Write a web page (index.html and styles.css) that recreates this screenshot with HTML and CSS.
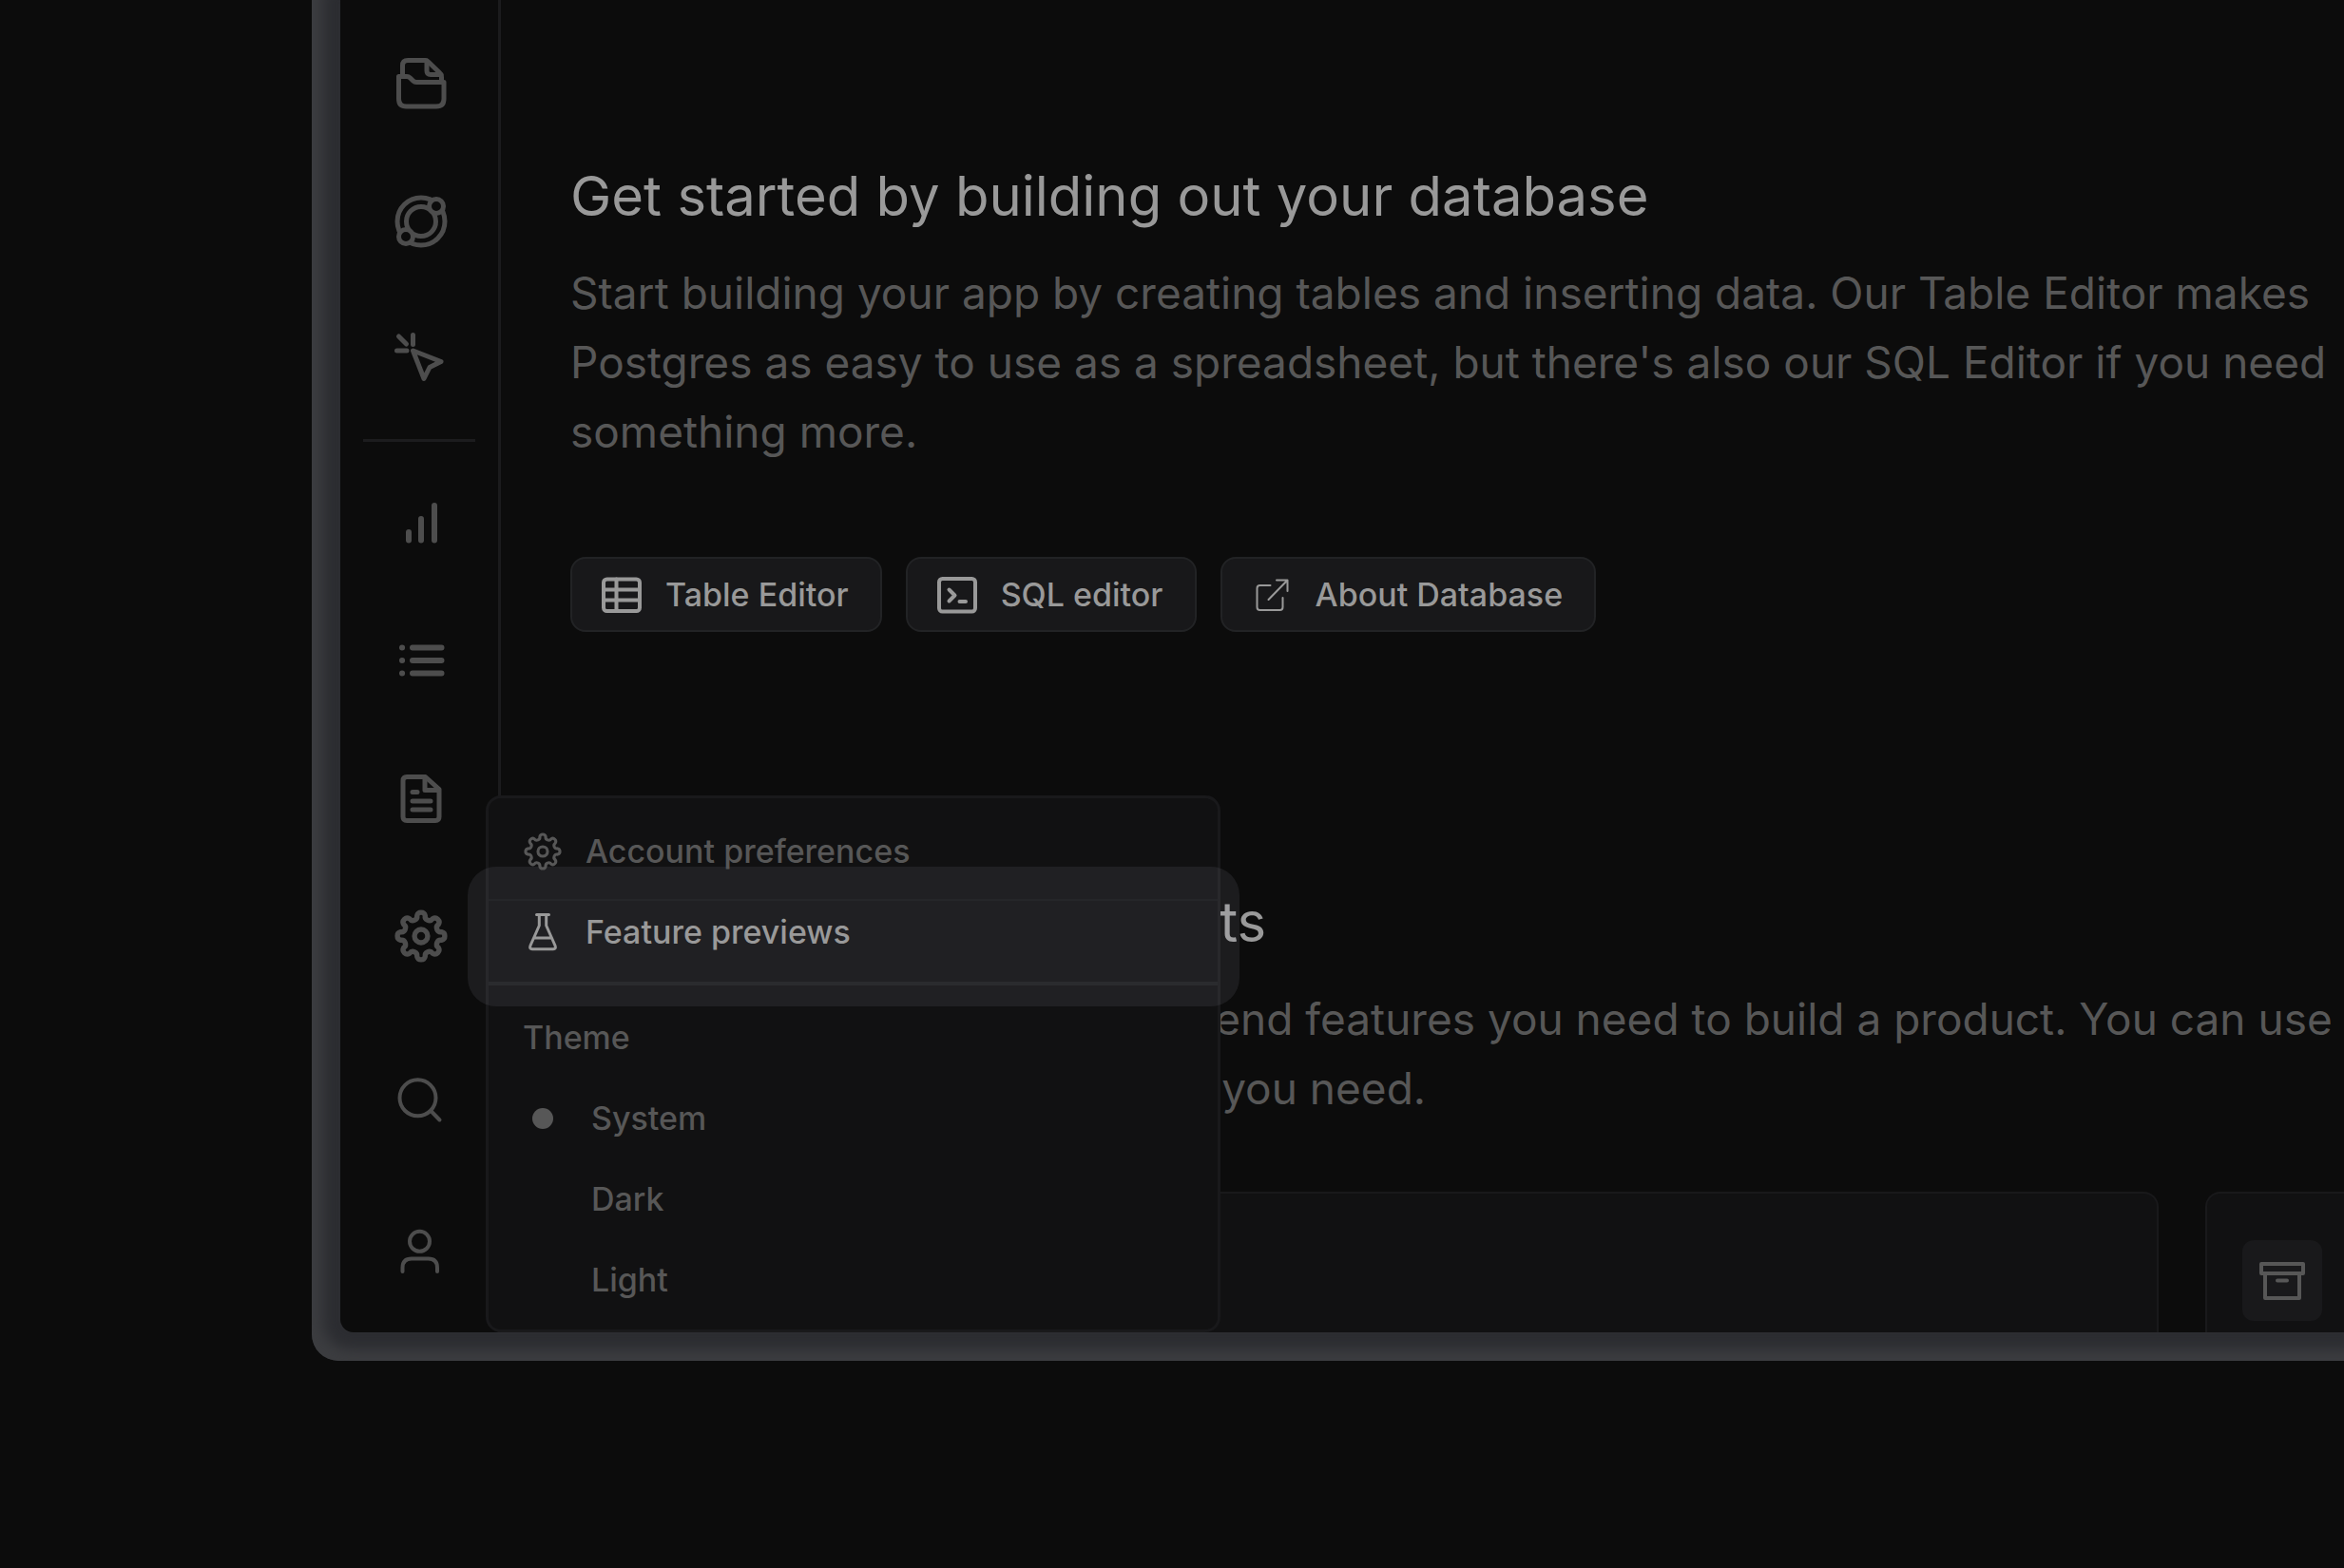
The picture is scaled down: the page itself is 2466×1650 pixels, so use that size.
FILE: index.html
```html
<!DOCTYPE html>
<html lang="en">
<head>
<meta charset="utf-8">
<meta name="viewport" content="width=device-width, initial-scale=1">
<title>Feature previews</title>
<link rel="stylesheet" href="styles.css">
</head>
<body>
<svg class="sprite" aria-hidden="true">
  <symbol id="gear" viewBox="0 0 60 60">
    <g transform="translate(30 30) scale(1.07)">
      <path d="M20.1-4A4.1 4.1 0 0 1 20.1 4A4.1 4.1 0 0 0 17.05 11.4A4.1 4.1 0 0 1 11.4 17.05A4.1 4.1 0 0 0 4 20.1A4.1 4.1 0 0 1-4 20.1A4.1 4.1 0 0 0-11.4 17.05A4.1 4.1 0 0 1-17.05 11.4A4.1 4.1 0 0 0-20.1 4A4.1 4.1 0 0 1-20.1-4A4.1 4.1 0 0 0-17.05-11.4A4.1 4.1 0 0 1-11.4-17.05A4.1 4.1 0 0 0-4-20.1A4.1 4.1 0 0 1 4-20.1A4.1 4.1 0 0 0 11.4-17.05A4.1 4.1 0 0 1 17.05-11.4A4.1 4.1 0 0 0 20.1-4Z"/>
      <circle r="6.500"/>
    </g>
  </symbol>
</svg>

<div class="frame">
  <div class="window">
    <nav class="sidebar" aria-label="Project">
      <a href="#storage" aria-label="Storage"><svg viewBox="0 0 60 60"><path d="M10.5 22V11Q10.5 5.500 16 5.500H34.500Q36 5.500 37.500 7L49.500 18.500Q51.500 20.500 51.500 23V28"/><path d="M36 6V16.500Q36 20.500 40 20.500H51"/><path d="M6.500 46V22.500H15Q17 22.500 18.500 24L21.500 27Q23 28.500 25 28.500H54V46Q54 54 46 54H14.500Q6.500 54 6.500 46Z"/></svg></a>
      <a href="#functions" aria-label="Edge Functions"><svg viewBox="0 0 60 60"><circle cx="30" cy="30" r="25"/><circle cx="30" cy="30" r="15.500"/><circle class="moon" cx="46" cy="14" r="7.500"/><circle class="moon" cx="14" cy="46" r="7.500"/></svg></a>
      <a href="#realtime" aria-label="Realtime"><svg viewBox="0 0 60 60"><path d="M6.500 6L14.500 14M21.500 4.500V14.500M4.500 21H15M21.500 21L51 32.500L39 38.500L33 50.500Z"/></svg></a>
      <hr>
      <a href="#reports" aria-label="Reports"><svg class="heavy" viewBox="0 0 60 60"><path d="M17 40V48.500M30 26V48.500M44 12V48.500"/></svg></a>
      <a href="#logs" aria-label="Logs"><svg class="heavy" viewBox="0 0 60 60"><path d="M10 16.500h.1M10 30h.1M10 43.500h.1M21 16.500H51.500M21 30H51.500M21 43.500H51.500"/></svg></a>
      <a href="#docs" aria-label="API Docs"><svg viewBox="0 0 60 60"><path d="M15 7.500H34.500L49 20.500V49.500Q49 53.500 45 53.500H15Q11 53.500 11 49.500V11.500Q11 7.500 15 7.500Z"/><path d="M34 8V21.500H48"/><path d="M21 23.500H26M21 33H40M21 42H40"/></svg></a>
      <a href="#settings" aria-label="Project Settings"><svg viewBox="0 0 60 60"><use href="#gear"/></svg></a>
      <div class="sidebar-foot">
        <a href="#search" aria-label="Search"><svg class="light" viewBox="0 0 60 60"><circle cx="26.500" cy="27.300" r="19"/><path d="M40.300 41L49.500 50.500"/></svg></a>
        <a href="#account" aria-label="Account"><svg class="light" viewBox="0 0 60 60"><circle cx="28.500" cy="18.300" r="10.500"/><path d="M10.500 50V46Q10.500 36.500 20 36.500H37.500Q47 36.500 47 46V50"/></svg></a>
      </div>
    </nav>

    <main class="content">
      <section>
        <h2>Get started by building out your database</h2>
        <p>Start building your app by creating tables and inserting data. Our Table Editor makes<br>Postgres as easy to use as a spreadsheet, but there's also our SQL Editor if you need<br>something more.</p>
        <div class="actions">
          <button type="button"><svg viewBox="0 0 42 42"><rect x="2" y="4.500" width="38" height="33.500" rx="3.500"/><path d="M15.500 4.500V38M2 15.500H40M2 26.500H40"/></svg>Table Editor</button>
          <button type="button"><svg viewBox="0 0 42 42"><rect x="2" y="4" width="38" height="34.500" rx="3.500"/><path d="M12.500 15.500L18.500 21.500L12.500 27.500M23.500 28H30"/></svg>SQL editor</button>
          <button type="button"><svg class="thin" viewBox="0 0 42 42"><path d="M19.500 11H8.500Q5.500 11 5.500 14V34Q5.500 37 8.500 37H29.500Q32.500 37 32.500 34V24M17.500 26L37.500 5.500M26 5.500H37.500V17"/></svg>About Database</button>
        </div>
      </section>
      <section>
        <h2>Explore our other products</h2>
        <p>Supabase provides all the backend features you need to build a product. You can use it<br>completely, or just the features you need.</p>
        <div class="cards">
          <article class="card"></article>
          <article class="card card-cut"><span class="tile"><svg viewBox="0 0 48 42"><path d="M2 3H46V13H2ZM6 13V39H42V13M19 20.500H29"/></svg></span></article>
        </div>
      </section>
    </main>

    <div class="menu">
      <button type="button" class="menu-row"><svg viewBox="0 0 58 58"><use href="#gear" x="-1" y="-1" width="60" height="60"/></svg>Account preferences</button>
      <button type="button" class="menu-row active"><svg class="flask" viewBox="0 0 42 42"><path d="M14.500 2.500H27.500M17.300 2.500V14L8 35Q6.700 38.700 10 38.700H32Q35.300 38.700 34 35L24.700 14V2.500M12 27H30"/></svg>Feature previews</button>
      <hr>
      <fieldset>
        <legend class="menu-row">Theme</legend>
        <label class="menu-row"><input type="radio" name="theme" checked>System</label>
        <label class="menu-row"><input type="radio" name="theme">Dark</label>
        <label class="menu-row"><input type="radio" name="theme">Light</label>
      </fieldset>
    </div>
  </div>
</div>
</body>
</html>
```
FILE: styles.css
```css
:root {
  --bg: #0c0c0c;
  --muted: #575757;
  --bright: #999;
  --icon: #4d4d4d;
}

* { box-sizing: border-box; }

body {
  margin: 0;
  min-height: 100vh;
  overflow: hidden;
  background: var(--bg);
  color: var(--muted);
  font-family: Inter, "Liberation Sans", sans-serif;
  font-size: 34px;
}

.sprite {
  position: absolute;
  width: 0;
  height: 0;
}

svg {
  display: block;
  flex: none;
  fill: none;
  stroke: currentColor;
  stroke-linecap: round;
  stroke-linejoin: round;
}

/* device frame around the app window */
.frame {
  margin-left: 328px;
  padding: 0 0 30px 30px;
  border-bottom-left-radius: 28px;
  background: #2c2d31;
  box-shadow: inset 12px -12px 14px #3c3d40;
}

.window {
  position: relative;
  display: flex;
  border-bottom-left-radius: 14px;
  background: var(--bg);
}

/* sidebar */
.sidebar {
  flex: none;
  display: flex;
  flex-direction: column;
  width: 169px;
  padding: 15px 0 4px;
  border-right: 3px solid #1b1b1d;
  color: var(--icon);
}

.sidebar a {
  display: flex;
  align-items: center;
  justify-content: center;
  height: 145px;
  padding-left: 3px;
  color: inherit;
}

.sidebar svg {
  width: 60px;
  height: 60px;
  stroke-width: 5;
}

.sidebar .heavy { stroke-width: 6; }
.sidebar .light { stroke-width: 4; }
.moon { fill: var(--bg); }

.sidebar hr {
  width: 118px;
  height: 3px;
  margin: 12px auto;
  border: 0;
  background: #1c1c1e;
}

.sidebar-foot {
  margin-top: auto;
  padding-top: 20px;
}

.sidebar-foot a { height: 160px; }

/* main column */
.content {
  flex: 1;
  min-width: 0;
  overflow: hidden;
  padding: 170px 0 0 73px;
}

section + section { margin-top: 269px; }

h2 {
  margin: 0 0 30px;
  color: var(--bright);
  font-size: 58px;
  font-weight: 400;
  line-height: 72px;
}

p {
  margin: 0;
  font-size: 46px;
  line-height: 73px;
  white-space: nowrap;
}

.actions {
  display: flex;
  gap: 25px;
  margin-top: 95px;
}

button {
  font: inherit;
  color: inherit;
  background: none;
  border: 0;
}

.actions button {
  display: flex;
  align-items: center;
  gap: 25px;
  height: 79px;
  padding: 0 33px 0 31px;
  border: 2px solid #222325;
  border-radius: 16px;
  background: #18181a;
  color: var(--bright);
  font-weight: 500;
}

.actions svg {
  width: 42px;
  height: 42px;
  stroke-width: 4;
}

.actions .thin { stroke-width: 2; }

.cards {
  display: flex;
  gap: 49px;
  margin-top: 72px;
}

.card {
  flex: 1;
  padding: 49px 37px 12px;
  border: 2px solid #19191b;
  border-bottom: 0;
  border-radius: 16px 16px 0 0;
  background: #111112;
}

.card-cut {
  flex: none;
  width: 146px;
  padding-right: 0;
  border-right: 0;
  border-top-right-radius: 0;
}

.tile {
  display: flex;
  align-items: center;
  justify-content: center;
  width: 84px;
  height: 85px;
  border-radius: 12px;
  background: #19191b;
}

.tile svg {
  width: 48px;
  height: 42px;
  stroke-width: 4;
}

/* account menu */
.menu {
  position: absolute;
  z-index: 1;
  left: 153px;
  bottom: 0;
  width: 773px;
  padding: 13px 0 10px;
  border: 3px solid #19191b;
  border-radius: 16px;
  background: #111112;
  font-weight: 500;
}

.menu-row {
  display: flex;
  align-items: center;
  gap: 24px;
  width: 100%;
  height: 85px;
  padding: 0 36px;
}

.menu-row svg {
  width: 42px;
  height: 42px;
  stroke-width: 4;
}

.menu-row .flask { stroke-width: 3; }

.active {
  position: relative;
  color: var(--bright);
}

/* spotlight behind the highlighted row, wider than the menu */
.active::before {
  content: "";
  position: absolute;
  z-index: -1;
  inset: -26px -23px -36px -22px;
  border-radius: 30px;
  background: rgba(225, 230, 255, 0.075);
}

.active::after {
  content: "";
  position: absolute;
  inset: 8px 0 auto;
  height: 2px;
  background: #252629;
}

.menu hr {
  height: 4px;
  margin: 10px 0 12px;
  border: 0;
  background: #2a2b2e;
}

fieldset {
  margin: 0;
  padding: 0;
  border: 0;
}

legend { padding: 0 36px; }

label.menu-row { gap: 30px; }

input[type="radio"] {
  appearance: none;
  flex: none;
  width: 22px;
  height: 22px;
  margin: 0 10px;
  border-radius: 50%;
}

input[type="radio"]:checked { background: var(--muted); }
```
